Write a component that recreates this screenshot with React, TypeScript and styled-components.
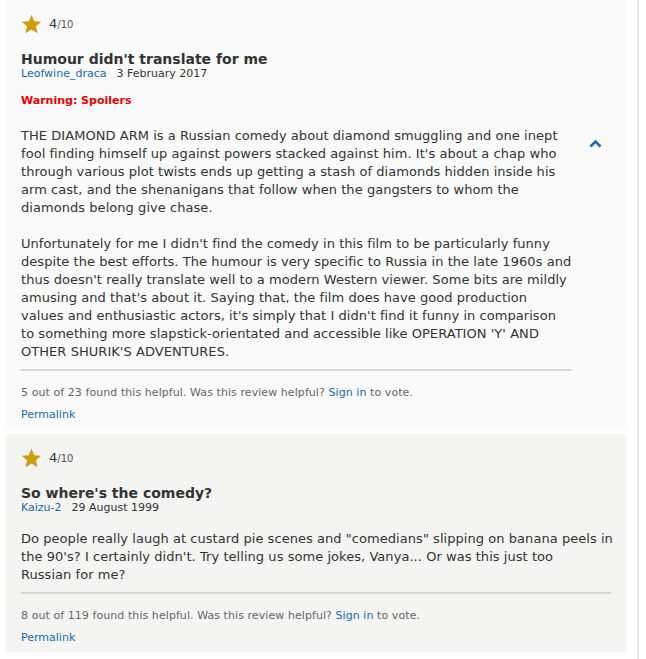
import React from "react";
import styled, { createGlobalStyle } from "styled-components";

const Global = createGlobalStyle`
  html, body { margin: 0; padding: 0; background: #fff; }
  body { font-family: Verdana, "DejaVu Sans", sans-serif; color: #333; }
  * { box-sizing: border-box; }
`;

const Page = styled.div`
  display: flex;
  width: 646px;
  height: 659px;
  padding-left: 6px;
  overflow: hidden;
`;

const List = styled.div`
  width: 620px;
  display: flex;
  flex-direction: column;
  gap: 5px;
`;

const Edge = styled.div`
  margin-left: 11px;
  width: 2px;
  background: #e8e8e8;
  height: 100%;
`;

const Card = styled.div<{ $alt?: boolean }>`
  background: ${(p) => (p.$alt ? "#f4f4f2" : "#fafafa")};
  padding: 14px 15px 8px 15px;
  display: flex;
  flex-direction: column;
`;

const RatingRow = styled.div`
  display: flex;
  align-items: center;
  gap: 7px;
  height: 19px;
`;

const Score = styled.span`
  font-size: 13px;
  color: #333;
  span {
    font-size: 10px;
    color: #555;
  }
`;

const Title = styled.div`
  margin-top: 18px;
  font-size: 14px;
  font-weight: bold;
  color: #333;
  line-height: 16px;
`;

const Meta = styled.div`
  font-size: 11px;
  color: #333;
  line-height: 13px;
  display: flex;
  gap: 10px;
`;

const Link = styled.a`
  color: #136cb2;
  text-decoration: none;
`;

const Warning = styled.div`
  margin-top: 14px;
  color: #e00;
  font-weight: bold;
  font-size: 11px;
  line-height: 14px;
`;

const BodyRow = styled.div<{ $top: number }>`
  display: flex;
  margin-top: ${(p) => p.$top}px;
`;

const Content = styled.div`
  flex: 1;
  min-width: 0;
`;

const Text = styled.p`
  margin: 0 0 18px 0;
  font-size: 13px;
  line-height: 18px;
  letter-spacing: 0.05px;
  white-space: nowrap;
  color: #333;
  &:last-child { margin-bottom: 0; }
`;

const Expander = styled.div`
  width: 40px;
  flex: none;
  display: flex;
  justify-content: flex-end;
  align-items: flex-start;
  padding-top: 12px;
  padding-right: 9px;
`;

const Actions = styled.div<{ $gap: number }>`
  margin-right: ${(p) => p.$gap}px;
  border-top: 2px solid #d6d6d6;
  margin-top: 8px;
  padding-top: 15px;
  font-size: 11px;
  line-height: 13px;
  letter-spacing: 0.07px;
  color: #666;
`;

const Perma = styled(Link)`
  display: block;
  margin-top: 9px;
  font-size: 11px;
  line-height: 13px;
`;

const Star = () => (
  <svg width="21" height="20" viewBox="0 0 24 23">
    <path
      d="M12 0.8l3.2 7.4 8 0.7-6.1 5.3 1.8 7.9L12 17.9 5.1 22.1l1.8-7.9L0.8 8.9l8-0.7z"
      fill="#d09c0c"
    />
  </svg>
);

const Chevron = () => (
  <svg width="13" height="9" viewBox="0 0 13 9">
    <path d="M1.5 7.5L6.5 2.5 11.5 7.5" fill="none" stroke="#136cb2" strokeWidth="2.6" />
  </svg>
);

type Review = {
  title: string;
  user: string;
  date: string;
  spoiler?: boolean;
  paragraphs: string[][];
  helpful: string;
  alt?: boolean;
};

const reviews: Review[] = [
  {
    title: "Humour didn't translate for me",
    user: "Leofwine_draca",
    date: "3 February 2017",
    spoiler: true,
    paragraphs: [
      [
        "THE DIAMOND ARM is a Russian comedy about diamond smuggling and one inept",
        "fool finding himself up against powers stacked against him. It's about a chap who",
        "through various plot twists ends up getting a stash of diamonds hidden inside his",
        "arm cast, and the shenanigans that follow when the gangsters to whom the",
        "diamonds belong give chase.",
      ],
      [
        "Unfortunately for me I didn't find the comedy in this film to be particularly funny",
        "despite the best efforts. The humour is very specific to Russia in the late 1960s and",
        "thus doesn't really translate well to a modern Western viewer. Some bits are mildly",
        "amusing and that's about it. Saying that, the film does have good production",
        "values and enthusiastic actors, it's simply that I didn't find it funny in comparison",
        "to something more slapstick-orientated and accessible like OPERATION 'Y' AND",
        "OTHER SHURIK'S ADVENTURES.",
      ],
    ],
    helpful: "5 out of 23 found this helpful.",
  },
  {
    title: "So where's the comedy?",
    user: "Kaizu-2",
    date: "29 August 1999",
    paragraphs: [
      [
        'Do people really laugh at custard pie scenes and "comedians" slipping on banana peels in',
        "the 90's? I certainly didn't. Try telling us some jokes, Vanya... Or was this just too",
        "Russian for me?",
      ],
    ],
    helpful: "8 out of 119 found this helpful.",
    alt: true,
  },
];

const ReviewCard = ({ r }: { r: Review }) => (
  <Card $alt={r.alt}>
    <RatingRow>
      <Star />
      <Score>
        4<span>/10</span>
      </Score>
    </RatingRow>
    <Title>{r.title}</Title>
    <Meta>
      <Link href="#">{r.user}</Link>
      <span>{r.date}</span>
    </Meta>
    {r.spoiler && <Warning>Warning: Spoilers</Warning>}
    <BodyRow $top={r.spoiler ? 19 : 16}>
      <Content>
        {r.paragraphs.map((lines, i) => (
          <Text key={i}>
            {lines.map((l, j) => (
              <React.Fragment key={j}>
                {j > 0 && <br />}
                {l}
              </React.Fragment>
            ))}
          </Text>
        ))}
      </Content>
      {r.spoiler && (
        <Expander>
          <Chevron />
        </Expander>
      )}
    </BodyRow>
    <Actions $gap={r.spoiler ? 40 : 0}>
      {r.helpful} Was this review helpful? <Link href="#">Sign in</Link> to vote.
    </Actions>
    <Perma href="#">Permalink</Perma>
  </Card>
);

export default function App() {
  return (
    <>
      <Global />
      <Page>
        <List>
          {reviews.map((r, i) => (
            <ReviewCard key={i} r={r} />
          ))}
        </List>
        <Edge />
      </Page>
    </>
  );
}
